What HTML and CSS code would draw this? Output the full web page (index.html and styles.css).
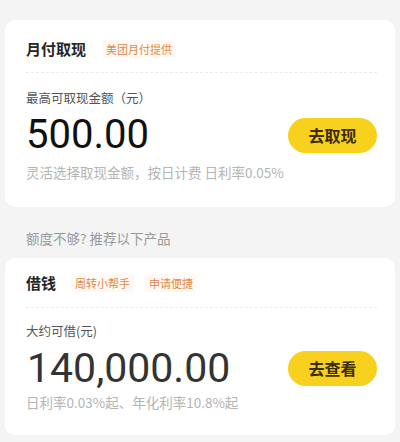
FILE: index.html
```html
<!DOCTYPE html>
<html lang="zh-CN">
<head>
<meta charset="utf-8">
<link rel="stylesheet" href="styles.css">
</head>
<body>
<div class="page">
  <section class="card card-first">
    <div class="card-head">
      <span class="card-title">月付取现</span>
      <span class="tag">美团月付提供</span>
    </div>
    <div class="card-body">
      <div class="label">最高可取现金额（元）</div>
      <div class="amount-row">
        <div class="amount amount-main">500.00</div>
        <button class="btn">去取现</button>
      </div>
      <div class="desc">灵活选择取现金额，按日计费 日利率0.05%</div>
    </div>
  </section>
  <div class="hint">额度不够? 推荐以下产品</div>
  <section class="card card-second">
    <div class="card-head">
      <span class="card-title">借钱</span>
      <span class="tag">周转小帮手</span>
      <span class="tag">申请便捷</span>
    </div>
    <div class="card-body">
      <div class="label">大约可借(元)</div>
      <div class="amount-row">
        <div class="amount amount-sub">140,000.00</div>
        <button class="btn">去查看</button>
      </div>
      <div class="desc">日利率0.03%起、年化利率10.8%起</div>
    </div>
  </section>
</div>
</body>
</html>
```
FILE: styles.css
```css
html, body {
  margin: 0;
  padding: 0;
  background: #f4f4f4;
  font-family: "Noto Sans CJK SC", "Noto Sans", sans-serif;
}
.page {
  width: 400px;
  height: 442px;
  overflow: hidden;
  padding: 20px 5px 0;
  box-sizing: border-box;
}
.card {
  background: #fff;
  border-radius: 10px;
  padding: 0 18px 0 21px;
}
.card-head {
  display: flex;
  align-items: center;
  gap: 12px;
  border-bottom: 1px dashed #ebebeb;
}
.card-first .card-head {
  padding: 18px 0 12px;
}
.card-second .card-head {
  padding: 14px 0 13px;
  gap: 11px;
}
.card-title {
  font-size: 15px;
  line-height: 22px;
  font-weight: 700;
  color: #262626;
  margin-right: 4px;
}
.tag {
  font-size: 11px;
  line-height: 16px;
  color: #e0894a;
  background: #fef9f4;
  padding: 1px 4px;
  border-radius: 3px;
}
.label {
  font-size: 12.5px;
  line-height: 18px;
  color: #555;
}
.card-first .label { margin-top: 16px; }
.card-second .label { margin-top: 14px; }
.amount-row {
  display: flex;
  align-items: center;
  justify-content: space-between;
}
.card-first .amount-row { margin-top: 6px; }
.card-second .amount-row { margin-top: 5px; }
.amount {
  font-family: Roboto, "Noto Sans", sans-serif;
  font-weight: 400;
}
.amount-main {
  font-size: 40px;
  line-height: 44px;
  color: #111;
}
.amount-sub {
  font-size: 41px;
  line-height: 46px;
  color: #333;
  margin-left: 1px;
}
.btn {
  width: 89px;
  height: 35px;
  border: 0;
  border-radius: 18px;
  background: #f8d01e;
  color: #3b2c05;
  font-family: "Noto Sans CJK SC", sans-serif;
  font-size: 16px;
  font-weight: 700;
  padding: 0;
}
.desc {
  font-size: 13.5px;
  line-height: 18px;
  color: #b4b4b4;
}
.card-first .desc { margin-top: 6px; }
.card-second .desc { margin-top: 2px; }
.card-first { padding-bottom: 26px; }
.card-second { padding-bottom: 24px; }
.hint {
  font-size: 13.5px;
  line-height: 18px;
  color: #999;
  margin: 22px 0 11px 21px;
}
```
